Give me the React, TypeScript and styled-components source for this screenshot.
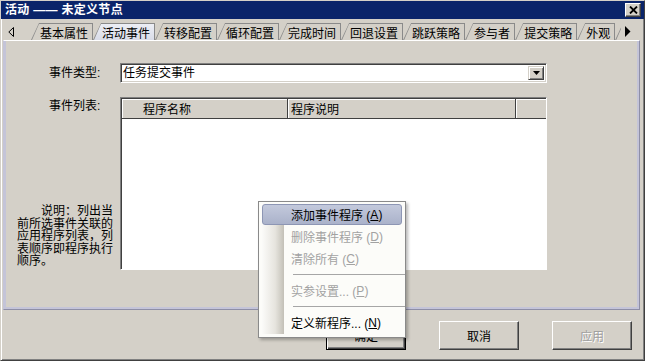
import React from 'react';
import styled, { createGlobalStyle } from 'styled-components';

const tabs = [
    '基本属性',
    '活动事件',
    '转移配置',
    '循环配置',
    '完成时间',
    '回退设置',
    '跳跃策略',
    '参与者',
    '提交策略',
    '外观',
];

const menuItems = [
    { label: '添加事件程序', key: 'A', active: true },
    { label: '删除事件程序', key: 'D', disabled: true },
    { label: '清除所有', key: 'C', disabled: true },
    { separator: true },
    { label: '实参设置...', key: 'P', disabled: true },
    { separator: true },
    { label: '定义新程序...', key: 'N' },
];

function App() {
    return (
        <>
            <GlobalStyle />
            <Window>
                <TitleBar>
                    <Title>活动 —— 未定义节点</Title>
                    <CloseButton>
                        <svg width="9" height="8" viewBox="0 0 9 8">
                            <path d="M1 0.5 L8 7.5 M8 0.5 L1 7.5" stroke="#000" strokeWidth="1.8" />
                        </svg>
                    </CloseButton>
                </TitleBar>

                <TabStrip>
                    <ScrollArrow>
                        <svg width="7" height="10" viewBox="0 0 7 10">
                            <polygon points="5.5,0.5 5.5,9.5 0.8,5" fill="none" stroke="#000" strokeWidth="1" />
                        </svg>
                    </ScrollArrow>
                    <TabViewport>
                        {tabs.map((t) => (
                            <Tab key={t}>
                                <TabFace $active={t === '活动事件'}>{t}</TabFace>
                            </Tab>
                        ))}
                        {/* next tab, scrolled out of view */}
                        <Tab>
                            <TabFace $stub />
                        </Tab>
                    </TabViewport>
                    <ScrollArrow>
                        <svg width="7" height="11" viewBox="0 0 7 11">
                            <polygon points="1,0 6.5,5.5 1,11" fill="#000" />
                        </svg>
                    </ScrollArrow>
                </TabStrip>

                <Panel>
                    <FormGrid>
                        <Label>事件类型:</Label>
                        <Combo>
                            <ComboText>任务提交事件</ComboText>
                            <DropButton>
                                <svg width="7" height="4" viewBox="0 0 7 4">
                                    <polygon points="0,0 7,0 3.5,4" fill="#000" />
                                </svg>
                            </DropButton>
                        </Combo>

                        <SideColumn>
                            <Label $top>事件列表:</Label>
                            <Note>
                                说明：列出当<br />
                                前所选事件关联的<br />
                                应用程序列表，列<br />
                                表顺序即程序执行<br />
                                顺序。
                            </Note>
                        </SideColumn>
                        <ListBox>
                            <ListHeader>
                                <HeaderCell $width={166} $pad={21}>程序名称</HeaderCell>
                                <HeaderCell $width={228} $pad={3}>程序说明</HeaderCell>
                                <HeaderCell $width={29} $pad={0} />
                            </ListHeader>
                        </ListBox>
                    </FormGrid>
                </Panel>

                <ButtonRow>
                    <DialogButton $default>确定</DialogButton>
                    <DialogButton>取消</DialogButton>
                    <DialogButton disabled>应用</DialogButton>
                </ButtonRow>

                <ContextMenu>
                    <MenuGutter />
                    {menuItems.map((item, i) =>
                        item.separator ? (
                            <MenuSeparator key={i} />
                        ) : (
                            <MenuItem key={i} $active={item.active} $disabled={item.disabled}>
                                {item.label} (<u>{item.key}</u>)
                            </MenuItem>
                        )
                    )}
                </ContextMenu>
            </Window>
        </>
    );
}

const GlobalStyle = createGlobalStyle`
    body {
        margin: 0;
        background: #d4d0c8;
        font-family: "Liberation Sans", "Noto Sans CJK SC", sans-serif;
        font-size: 12px;
    }
`;

const Window = styled.div`
    position: relative;
    width: 645px;
    height: 361px;
    box-sizing: border-box;
    background: #d4d0c8;
    border: 1px solid;
    border-color: #d4d0c8 #404040 #404040 #d4d0c8;
    box-shadow: inset 1px 1px #ffffff, inset -1px -1px #808080;
    display: flex;
    flex-direction: column;
    overflow: hidden;
`;

const TitleBar = styled.div`
    height: 18px;
    background: #0a246a;
    display: flex;
    align-items: center;
    justify-content: space-between;
    padding: 0 3px 0 4px;
`;

const Title = styled.div`
    color: #ffffff;
    font-weight: bold;
    font-size: 12px;
    line-height: 14px;
    letter-spacing: 0.3px;
`;

const CloseButton = styled.div`
    width: 16px;
    height: 14px;
    box-sizing: border-box;
    background: #d4d0c8;
    border: 1px solid;
    border-color: #ffffff #404040 #404040 #ffffff;
    box-shadow: inset -1px -1px #808080;
    display: flex;
    align-items: center;
    justify-content: center;
`;

const TabStrip = styled.div`
    height: 21px;
    display: flex;
    align-items: flex-end;
`;

const ScrollArrow = styled.div`
    width: 30px;
    height: 17px;
    display: flex;
    align-items: center;
    justify-content: center;
    &:first-child {
        justify-content: flex-start;
        padding-left: 7px;
        box-sizing: border-box;
    }
    &:last-child {
        width: 22px;
        justify-content: flex-start;
        padding-left: 3px;
        box-sizing: border-box;
    }
`;

const TabViewport = styled.div`
    width: 590px;
    display: flex;
    overflow: hidden;
`;

const Tab = styled.div`
    flex: none;
    padding: 1px 1px 0 1px;
    background: #8a8a8a;
    clip-path: polygon(0 100%, 8px 0, 100% 0, 100% 100%);
`;

const TabFace = styled.div<{ $active?: boolean; $stub?: boolean }>`
    height: 16px;
    width: ${(p) => (p.$stub ? '30px' : 'auto')};
    padding: 0 4px 0 8px;
    display: flex;
    align-items: center;
    white-space: nowrap;
    font-size: 12px;
    color: #000;
    background: ${(p) => (p.$active ? 'linear-gradient(#eceef5, #d9dce8)' : '#d4d0c8')};
    clip-path: polygon(0 100%, 7px 0, 100% 0, 100% 100%);
`;

const Panel = styled.div`
    height: 270px;
    margin: 0 4px 0 2px;
    box-sizing: border-box;
    border: 1px solid;
    border-color: #ffffff #8e8ea6 #8e8ea6 #c4c4d8;
    box-shadow: inset 2px 0 #c4c4d8, inset -2px -2px #c4c4d8;
    padding: 22px 0 0 13px;
`;

const FormGrid = styled.div`
    display: grid;
    grid-template-columns: 103px 427px;
    grid-template-rows: 20px 173px;
    row-gap: 14px;
`;

const Label = styled.div<{ $top?: boolean }>`
    padding-left: 32px;
    align-self: ${(p) => (p.$top ? 'start' : 'center')};
    padding-top: ${(p) => (p.$top ? '2px' : '0')};
    line-height: 14px;
`;

const SideColumn = styled.div`
    display: flex;
    flex-direction: column;
    justify-content: space-between;
`;

const Note = styled.div`
    width: 97px;
    text-indent: 24px;
    line-height: 12.6px;
    white-space: nowrap;
    margin-bottom: 2px;
`;

const Combo = styled.div`
    box-sizing: border-box;
    background: #ffffff;
    border: 1px solid;
    border-color: #808080 #ffffff #ffffff #808080;
    box-shadow: inset 1px 1px #404040, inset -1px -1px #d4d0c8;
    display: flex;
    align-items: center;
    justify-content: space-between;
    padding: 0 2px 0 2px;
`;

const ComboText = styled.div`
    line-height: 14px;
`;

const DropButton = styled.div`
    width: 16px;
    height: 14px;
    box-sizing: border-box;
    background: #d4d0c8;
    border: 1px solid;
    border-color: #d4d0c8 #404040 #404040 #d4d0c8;
    box-shadow: inset 1px 1px #ffffff, inset -1px -1px #808080;
    display: flex;
    align-items: center;
    justify-content: center;
`;

const ListBox = styled.div`
    box-sizing: border-box;
    background: #ffffff;
    border: 1px solid;
    border-color: #808080 #ffffff #ffffff #808080;
    box-shadow: inset 1px 1px #404040;
    padding: 1px 0 0 1px;
`;

const ListHeader = styled.div`
    display: flex;
    height: 20px;
    box-sizing: border-box;
    border-bottom: 1px solid #404040;
`;

const HeaderCell = styled.div<{ $width: number; $pad: number }>`
    width: ${(p) => p.$width}px;
    flex: none;
    box-sizing: border-box;
    padding-left: ${(p) => p.$pad}px;
    background: #d4d0c8;
    border-right: 1px solid #404040;
    box-shadow: inset 1px 1px #ffffff;
    display: flex;
    align-items: center;
    &:last-child {
        border-right: none;
        flex: 1;
    }
`;

const ButtonRow = styled.div`
    display: flex;
    justify-content: flex-end;
    gap: 33px;
    padding: 11px 12px 0 0;
`;

const DialogButton = styled.button<{ $default?: boolean }>`
    width: 80px;
    height: 29px;
    box-sizing: border-box;
    font: inherit;
    font-size: 12px;
    color: #000;
    background: #d4d0c8;
    border: 1px solid;
    border-color: ${(p) => (p.$default ? '#000 #000 #000 #000' : '#ffffff #404040 #404040 #ffffff')};
    box-shadow: ${(p) =>
        p.$default
            ? 'inset 1px 1px #ffffff, inset -1px -1px #404040, inset -2px -2px #808080'
            : 'inset -1px -1px #808080'};
    padding: 0;
    &:disabled {
        color: #a0a0a0;
        text-shadow: 1px 1px #ffffff;
    }
`;

const ContextMenu = styled.div`
    position: absolute;
    left: 257px;
    top: 200px;
    width: 148px;
    box-sizing: border-box;
    padding: 2px 3px 3px 3px;
    background: #fcfcf9;
    border: 1px solid #8a8a8a;
    box-shadow: 2px 2px 3px rgba(0, 0, 0, 0.28);
`;

const MenuGutter = styled.div`
    position: absolute;
    left: 3px;
    top: 2px;
    bottom: 3px;
    width: 22px;
    background: linear-gradient(to right, #fbfbf9, #e6e4de 60%, #c3c0b7);
`;

const MenuItem = styled.div<{ $active?: boolean; $disabled?: boolean }>`
    position: relative;
    height: 21px;
    box-sizing: border-box;
    padding-left: 28px;
    display: flex;
    align-items: center;
    white-space: nowrap;
    color: ${(p) => (p.$disabled ? '#a2a2a2' : '#000')};
    background: ${(p) => (p.$active ? 'linear-gradient(#c3c9dc, #aab2ca)' : 'transparent')};
    border: 1px solid ${(p) => (p.$active ? '#8d96b4' : 'transparent')};
    border-radius: 3px;
    margin-bottom: 1px;
`;

const MenuSeparator = styled.div`
    position: relative;
    height: 1px;
    margin: 5px -3px 5px 31px;
    background: #a6a6a6;
`;

export default App;
